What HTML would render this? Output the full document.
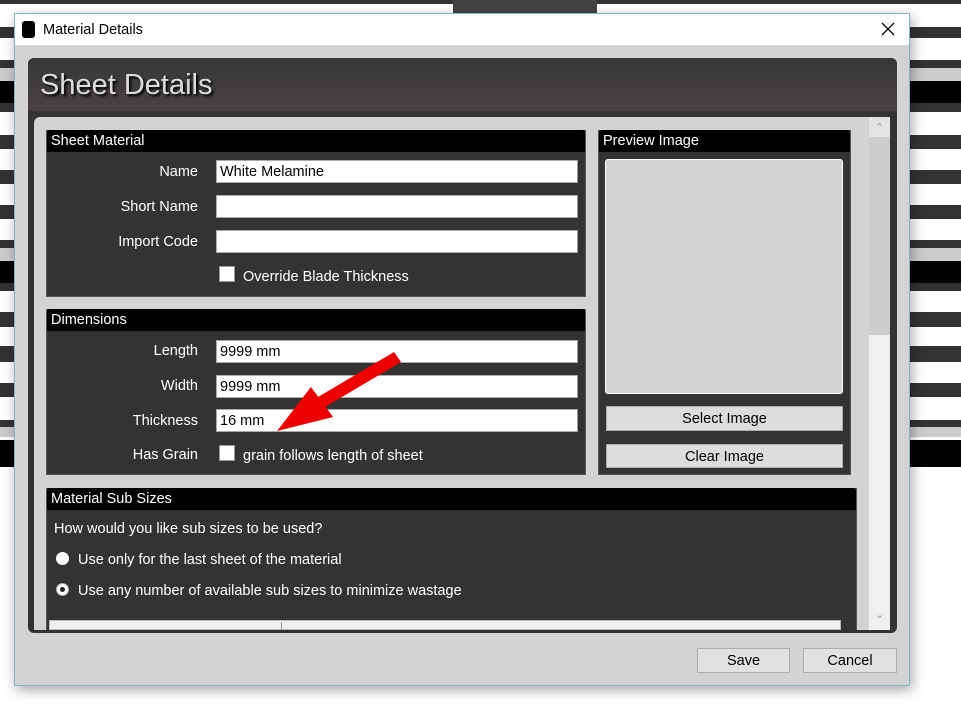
<!DOCTYPE html>
<html><head><style>
*{margin:0;padding:0;box-sizing:border-box}
body{width:961px;height:725px;position:relative;overflow:hidden;background:#fff;font-family:"Liberation Sans",sans-serif;font-size:14px;color:#fff}
.a{position:absolute}
.s{position:absolute;left:0;width:961px}
.grp{position:absolute;background:#333;border:1px solid #555;border-top:none}
.hd{position:absolute;left:0;right:0;top:0;height:22px;background:#000;padding:3px 0 0 4px;font-size:14.5px;border-radius:3px 3px 0 0}
.lbl{position:absolute;width:152px;text-align:right;font-size:14.5px}
.in{position:absolute;background:#fff;border:1px solid #aaa;border-right-color:#999;color:#000;height:23px;padding:3px 3px 0;font-size:14.5px}
.cb{position:absolute;width:16px;height:16px;background:#fff;border:1px solid #999}
.btn{position:absolute;background:#ddd;border:1px solid #aaa;color:#000;text-align:center;font-size:14.5px;padding-top:4px}
</style></head><body>
<div class="s" style="top:0;height:4px;background:#333"></div>
<div class="s" style="top:27px;height:11px;background:#333"></div>
<div class="s" style="top:60px;height:8px;background:#333"></div>
<div class="s" style="top:68px;height:13px;background:#ccc"></div>
<div class="s" style="top:81px;height:22px;background:#000"></div>
<div class="s" style="top:103px;height:9px;background:#333"></div>
<div class="s" style="top:135px;height:14px;background:#333"></div>
<div class="s" style="top:170px;height:14px;background:#333"></div>
<div class="s" style="top:205px;height:14px;background:#333"></div>
<div class="s" style="top:240px;height:8px;background:#333"></div>
<div class="s" style="top:248px;height:13px;background:#ccc"></div>
<div class="s" style="top:261px;height:22px;background:#000"></div>
<div class="s" style="top:283px;height:8px;background:#333"></div>
<div class="s" style="top:312px;height:15px;background:#333"></div>
<div class="s" style="top:346px;height:16px;background:#333"></div>
<div class="s" style="top:383px;height:14px;background:#333"></div>
<div class="s" style="top:420px;height:7px;background:#333"></div>
<div class="s" style="top:427px;height:10px;background:#ccc"></div>
<div class="s" style="top:440px;height:27px;background:#000"></div>
<div class="a" style="left:453px;top:0;width:144px;height:14px;background:#444"></div>

<div class="a" style="left:14px;top:13px;width:896px;height:673px;background:#d3d3d3;border:1px solid #7fb8c0;box-shadow:2px 4px 12px rgba(0,0,0,.35)"></div>
<div class="a" style="left:15px;top:14px;width:894px;height:31px;background:#fff;color:#000;font-size:14.5px">
 <div class="a" style="left:7px;top:7px;width:13px;height:17px;background:#000;border-radius:3px"></div>
 <div class="a" style="left:28px;top:8px">Material Details</div>
 <svg class="a" style="left:866px;top:8px" width="14" height="14"><path d="M1 1L13 13M13 1L1 13" stroke="#000" stroke-width="1.3"/></svg>
</div>

<div class="a" style="left:28px;top:58px;width:869px;height:575px;background:#333;border-radius:6px"></div>
<div class="a" style="left:28px;top:58px;width:869px;height:53px;background:linear-gradient(#363636,#4a4242);border-radius:6px 6px 0 0"></div>
<div class="a" style="left:40px;top:69px;font-size:29px;color:#dcdcdc;text-shadow:2px 2px 2px #000">Sheet Details</div>
<div class="a" style="left:34px;top:117px;width:835px;height:513px;background:#d3d3d3;border-radius:6px 0 0 0"></div>
<div class="a" style="left:869px;top:117px;width:21px;height:513px;background:#f0f0f0"></div>
<div class="a" style="left:869px;top:117px;width:21px;height:20px;background:#e3e3e3;color:#999;font-size:11px;text-align:center;padding-top:4px">&#8963;</div>
<div class="a" style="left:869px;top:137px;width:21px;height:198px;background:#cdcdcd"></div>
<div class="a" style="left:869px;top:608px;width:21px;height:20px;color:#999;font-size:11px;text-align:center">&#8964;</div>

<div class="grp" style="left:46px;top:130px;width:540px;height:167px"><div class="hd">Sheet Material</div></div>
<div class="lbl" style="left:46px;top:164px">Name</div>
<div class="in" style="left:216px;top:160px;width:362px">White Melamine</div>
<div class="lbl" style="left:46px;top:199px">Short Name</div>
<div class="in" style="left:216px;top:195px;width:362px"></div>
<div class="lbl" style="left:46px;top:234px">Import Code</div>
<div class="in" style="left:216px;top:230px;width:362px"></div>
<div class="cb" style="left:219px;top:266px"></div>
<div class="a" style="left:243px;top:269px;font-size:14.5px">Override Blade Thickness</div>

<div class="grp" style="left:46px;top:309px;width:540px;height:166px"><div class="hd">Dimensions</div></div>
<div class="lbl" style="left:46px;top:343px">Length</div>
<div class="in" style="left:216px;top:340px;width:362px">9999 mm</div>
<div class="lbl" style="left:46px;top:378px">Width</div>
<div class="in" style="left:216px;top:375px;width:362px">9999 mm</div>
<div class="lbl" style="left:46px;top:413px">Thickness</div>
<div class="in" style="left:216px;top:409px;width:362px">16 mm</div>
<div class="lbl" style="left:46px;top:447px">Has Grain</div>
<div class="cb" style="left:219px;top:445px"></div>
<div class="a" style="left:243px;top:448px;font-size:14.5px">grain follows length of sheet</div>

<div class="grp" style="left:598px;top:130px;width:253px;height:345px"><div class="hd">Preview Image</div></div>
<div class="a" style="left:605px;top:159px;width:238px;height:235px;background:#d3d3d3;border:1px solid #fff;border-radius:3px"></div>
<div class="btn" style="left:606px;top:406px;width:237px;height:25px">Select Image</div>
<div class="btn" style="left:606px;top:444px;width:237px;height:24px">Clear Image</div>

<div class="grp" style="left:46px;top:488px;width:811px;height:142px;border-bottom:none"><div class="hd">Material Sub Sizes</div></div>
<div class="a" style="left:54px;top:521px;font-size:14.5px">How would you like sub sizes to be used?</div>
<div class="a" style="left:56px;top:552px;width:13px;height:13px;border-radius:50%;background:#fff"></div>
<div class="a" style="left:78px;top:552px;font-size:14.5px">Use only for the last sheet of the material</div>
<div class="a" style="left:56px;top:583px;width:13px;height:13px;border-radius:50%;background:#fff;border:1px solid #aaa"><div class="a" style="left:3px;top:3px;width:5px;height:5px;border-radius:50%;background:#222"></div></div>
<div class="a" style="left:78px;top:583px;font-size:14.5px">Use any number of available sub sizes to minimize wastage</div>
<div class="a" style="left:49px;top:620px;width:792px;height:10px;background:#f0f0f0;border:1px solid #bbb"></div>
<div class="a" style="left:281px;top:622px;width:1px;height:8px;background:#999"></div>

<svg class="a" style="left:0;top:0" width="961" height="725">
<polygon points="394,352 401,362 320,410 313,400" fill="#ee0000"/>
<polygon points="277,431 311,387 333,417" fill="#ee0000"/>
</svg>

<div class="btn" style="left:697px;top:648px;width:93px;height:25px;background:#e1e1e1;border-color:#adadad">Save</div>
<div class="btn" style="left:803px;top:648px;width:94px;height:25px;background:#e1e1e1;border-color:#adadad">Cancel</div>
</body></html>
